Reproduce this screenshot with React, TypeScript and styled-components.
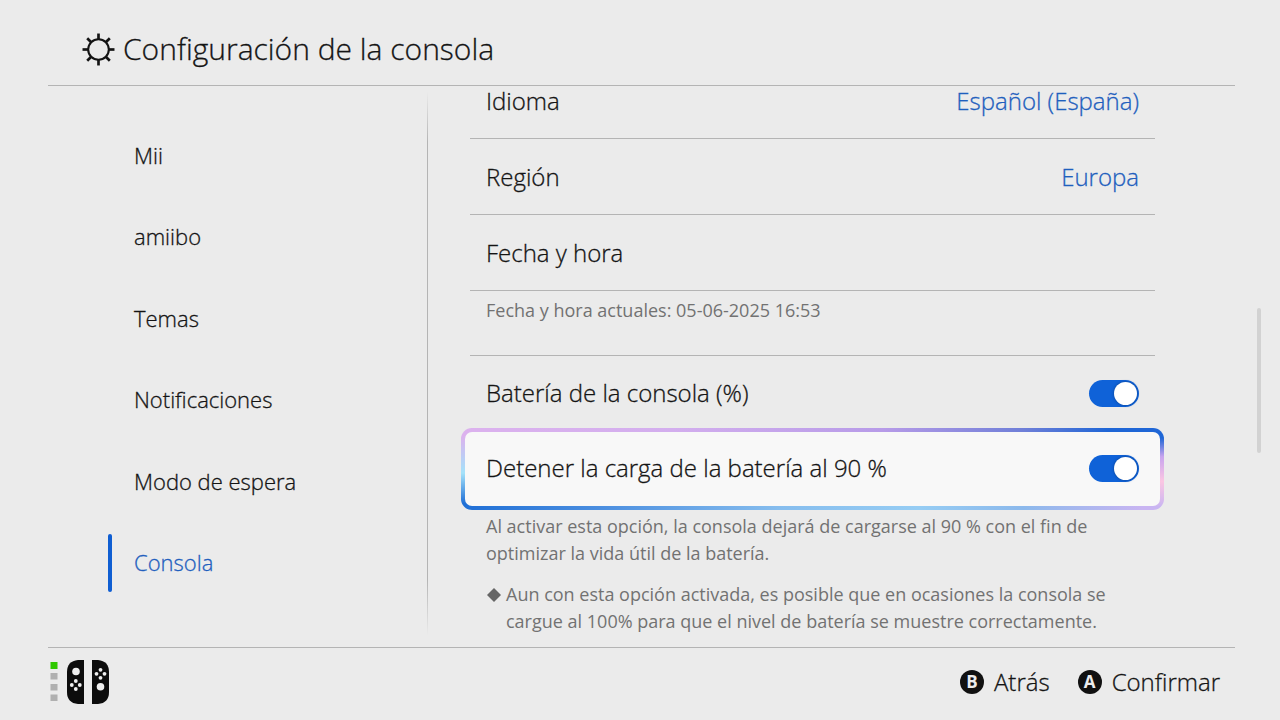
import React from "react";
import styled, { createGlobalStyle, css } from "styled-components";

const ink = "#141414";
const blue = "#1f5fbe";
const rule = "#b4b4b4";

const GlobalStyle = createGlobalStyle`
  *, *::before, *::after { box-sizing: border-box; }
  body {
    margin: 0;
    background: #ebebeb;
    color: ${ink};
    font-family: "Open Sans", "Noto Sans", sans-serif;
    font-weight: 300;
    -webkit-text-stroke: 0.3px currentColor;
  }
  button { font: inherit; color: inherit; border: 0; background: none; padding: 0; cursor: pointer; }
`;

const Screen = styled.div`
  display: flex;
  flex-direction: column;
  height: 100vh;
  overflow: hidden;
`;

const Header = styled.header`
  display: flex;
  align-items: center;
  flex: none;
  gap: 8px;
  height: 86px;
  margin: 0 45px 0 48px;
  padding: 13px 34px 0;
  border-bottom: 1px solid ${rule};
`;

const Title = styled.h1`
  margin: 0;
  font-size: 30px;
  line-height: 40px;
  font-weight: 300;
`;

const Body = styled.div`
  display: flex;
  flex: 1;
  min-height: 0;
`;

const Sidebar = styled.nav`
  display: flex;
  flex: none;
  width: 428px;
  padding: 29px 0 43px 108px;
  background: linear-gradient(to bottom, transparent 1%, ${rule} 10%, ${rule} 88%, transparent 98%) right / 1px 100% no-repeat;
`;

const NavList = styled.ul`
  display: flex;
  flex-direction: column;
  flex: 1;
  margin: 0;
  padding: 0;
  list-style: none;
`;

const NavItem = styled.li`
  display: flex;
  flex: 1;
  align-items: center;
`;

const NavLink = styled.a<{ $active?: boolean }>`
  display: flex;
  align-items: center;
  gap: 22px;
  height: 58px;
  padding-bottom: 2px;
  color: ${(p) => (p.$active ? blue : ink)};
  font-size: 22px;
  line-height: 32px;
  text-decoration: none;

  &::before {
    content: "";
    align-self: stretch;
    width: 4px;
    margin-bottom: -2px;
    border-radius: 2px;
    background: ${(p) => (p.$active ? "#0f5ed2" : "transparent")};
  }
`;

const Panel = styled.main`
  display: flex;
  flex: 1;
  flex-direction: column;
  justify-content: flex-end;
  min-width: 0;
  overflow: clip;
  overflow-clip-margin: 4px;
  padding: 0 102px 0 42px;
`;

const rowBase = css`
  display: flex;
  flex: none;
  align-items: center;
  justify-content: space-between;
  width: 100%;
  height: 76px;
  font-size: 24px;
  line-height: 28px;
`;

const RowButton = styled.button`
  ${rowBase}
  padding: 0 16px;
  border-bottom: 1px solid ${rule};
  text-align: left;
`;

const RowLabel = styled.label`
  ${rowBase}
  padding: 0 16px 2px;
  cursor: pointer;
`;

const Value = styled.span`
  color: ${blue};
`;

const Focus = styled.div`
  flex: none;
  margin: -4px -9px 0;
  padding: 4px;
  border-radius: 11px;
  background:
    linear-gradient(to right, #dcb2ee, #d3aeee 30%, #b79be8 60%, #6f7fd8 80%, #1f66d6 92%) top / 100% 4px no-repeat,
    linear-gradient(to right, #1f6fd6, #4c8fe0 20%, #86bdee 45%, #96cdf4 65%, #8cb9ec 80%, #c9b5f2 97%) bottom / 100% 4px no-repeat,
    linear-gradient(to bottom, #dcb2ee 10%, #a4e2fa 55%, #1f6fd6 92%) left / 50% 100% no-repeat,
    linear-gradient(to bottom, #1f66d6 12%, #c8a4ee 35%, #fbc6e2 65%, #c9b5f2 97%) right / 50% 100% no-repeat;

  & > label {
    height: 74px;
    padding: 0 21px 2px;
    border-radius: 7px;
    background: #f8f8f8;
  }
`;

const Switch = styled.input`
  appearance: none;
  display: flex;
  flex: none;
  justify-content: flex-end;
  width: 50px;
  height: 27px;
  margin: 0;
  padding: 2px;
  border-radius: 14px;
  background: #0f62d8;
  cursor: pointer;

  &::before {
    content: "";
    width: 23px;
    height: 23px;
    border-radius: 50%;
    background: #fff;
    box-shadow: 0 0 3px #0a3f8c;
  }

  &:not(:checked) {
    justify-content: flex-start;
    background: #9a9a9a;
  }
`;

const smallText = css`
  color: #727272;
  font-size: 18px;
  line-height: 27px;
  font-weight: 400;
  -webkit-text-stroke: 0;
`;

const Caption = styled.p`
  ${smallText}
  flex: none;
  height: 65px;
  margin: 0;
  padding: 6px 16px;
  border-bottom: 1px solid ${rule};
`;

const Help = styled.div`
  ${smallText}
  flex: none;
  padding: 3px 16px 12px;
`;

const HelpText = styled.p`
  margin: 0 0 14px;
`;

const HelpNote = styled.div`
  display: flex;
  gap: 4px;
`;

const Diamond = styled.svg`
  flex: none;
  width: 16px;
  height: 27px;
`;

const ScrollTrack = styled.div`
  display: flex;
  flex: none;
  align-items: flex-start;
  width: 23px;
  padding-top: 222px;
`;

const ScrollThumb = styled.div`
  width: 4px;
  height: 145px;
  border-radius: 2px;
  background: #d2d2d2;
`;

const Footer = styled.footer`
  display: flex;
  flex: none;
  align-items: center;
  justify-content: space-between;
  height: 73px;
  margin: 0 45px 0 48px;
  padding: 0 15px 4px 0;
  border-top: 1px solid ${rule};
`;

const Actions = styled.div`
  display: flex;
  gap: 28px;
`;

const Action = styled.button`
  display: flex;
  align-items: center;
  gap: 10px;
  font-size: 24px;
  line-height: 32px;
`;

const Key = styled.span`
  display: grid;
  place-items: center;
  width: 24px;
  height: 24px;
  border-radius: 50%;
  background: #111;
  color: #ececec;
  font-size: 17px;
  line-height: 24px;
  font-weight: 700;
  -webkit-text-stroke: 0;
`;

const sections = ["Mii", "amiibo", "Temas", "Notificaciones", "Modo de espera", "Consola"];

function GearIcon() {
  return (
    <svg width="33" height="33" viewBox="-16 -16 32 32" fill="none" stroke={ink} strokeWidth="2" aria-hidden="true">
      <circle r="10" />
      {[0, 45, 90, 135, 180, 225, 270, 315].map((a) => (
        <path key={a} d="M0-10V-15.5" strokeWidth="2.6" transform={`rotate(${a})`} />
      ))}
    </svg>
  );
}

function ControllerIcon() {
  return (
    <svg width="62" height="46" viewBox="48 659 62 46" role="img" aria-label="Joy-Con">
      <rect x="50.500" y="662" width="7" height="7" fill="#2fc800" />
      {[673, 684, 694.5].map((y) => (
        <rect key={y} x="50.500" y={y} width="7" height="6.500" fill="#b0b0b0" />
      ))}
      <path fill="#0c0c0c" d="M84 660V704H78Q67 703 67 692V672Q67 661 78 660Z" />
      <path fill="#0c0c0c" d="M92 660V704H98Q109 703 109 692V672Q109 661 98 660Z" />
      <g fill="#efefef">
        <circle cx="76" cy="671.500" r="3.800" />
        <circle cx="100.500" cy="686.800" r="3.800" />
        {[[75.8, 685], [100.5, 673.8]].map(([x, y]) => (
          <g key={x}>
            <circle cx={x} cy={y - 4} r="1.900" />
            <circle cx={x} cy={y + 4} r="1.900" />
            <circle cx={x - 4} cy={y} r="1.900" />
            <circle cx={x + 4} cy={y} r="1.900" />
          </g>
        ))}
      </g>
    </svg>
  );
}

export default function App() {
  return (
    <Screen>
      <GlobalStyle />
      <Header>
        <GearIcon />
        <Title>Configuración de la consola</Title>
      </Header>
      <Body>
        <Sidebar>
          <NavList>
            {sections.map((s) => (
              <NavItem key={s}>
                <NavLink href="#" $active={s === "Consola"}>{s}</NavLink>
              </NavItem>
            ))}
          </NavList>
        </Sidebar>
        <Panel>
          <RowButton>Idioma<Value>Español (España)</Value></RowButton>
          <RowButton>Región<Value>Europa</Value></RowButton>
          <RowButton>Fecha y hora</RowButton>
          <Caption>Fecha y hora actuales: 05-06-2025 16:53</Caption>
          <RowLabel htmlFor="battery">
            Batería de la consola (%)
            <Switch id="battery" type="checkbox" defaultChecked />
          </RowLabel>
          <Focus>
            <RowLabel htmlFor="limit">
              Detener la carga de la batería al 90 %
              <Switch id="limit" type="checkbox" defaultChecked />
            </RowLabel>
          </Focus>
          <Help>
            <HelpText>
              Al activar esta opción, la consola dejará de cargarse al 90 % con el fin de<br />
              optimizar la vida útil de la batería.
            </HelpText>
            <HelpNote>
              <Diamond viewBox="0 0 16 27" aria-hidden="true"><path d="M8 7L15 14L8 21L1 14Z" fill="#666" /></Diamond>
              <span>
                Aun con esta opción activada, es posible que en ocasiones la consola se<br />
                cargue al 100% para que el nivel de batería se muestre correctamente.
              </span>
            </HelpNote>
          </Help>
        </Panel>
        <ScrollTrack><ScrollThumb /></ScrollTrack>
      </Body>
      <Footer>
        <ControllerIcon />
        <Actions>
          <Action><Key>B</Key>Atrás</Action>
          <Action><Key>A</Key>Confirmar</Action>
        </Actions>
      </Footer>
    </Screen>
  );
}
